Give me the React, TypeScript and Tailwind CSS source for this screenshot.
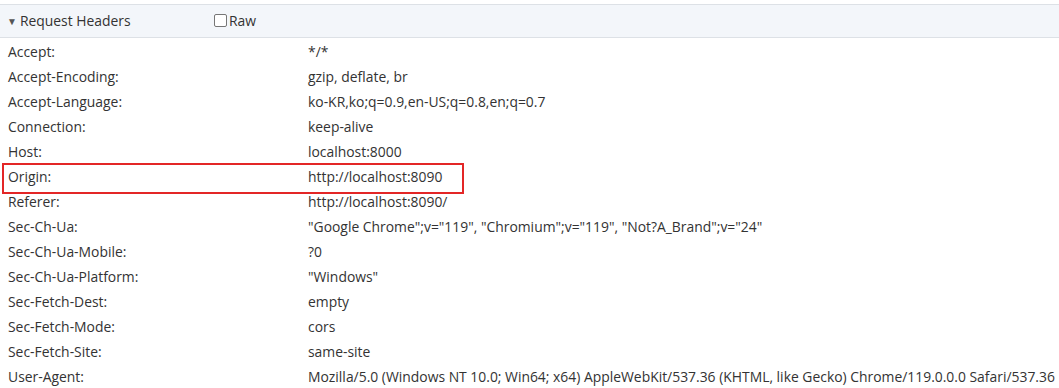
import React from "react";

const rows: [string, string][] = [
  ["Accept:", "*/*"],
  ["Accept-Encoding:", "gzip, deflate, br"],
  ["Accept-Language:", "ko-KR,ko;q=0.9,en-US;q=0.8,en;q=0.7"],
  ["Connection:", "keep-alive"],
  ["Host:", "localhost:8000"],
  ["Origin:", "http://localhost:8090"],
  ["Referer:", "http://localhost:8090/"],
  ["Sec-Ch-Ua:", "\"Google Chrome\";v=\"119\", \"Chromium\";v=\"119\", \"Not?A_Brand\";v=\"24\""],
  ["Sec-Ch-Ua-Mobile:", "?0"],
  ["Sec-Ch-Ua-Platform:", "\"Windows\""],
  ["Sec-Fetch-Dest:", "empty"],
  ["Sec-Fetch-Mode:", "cors"],
  ["Sec-Fetch-Site:", "same-site"],
  ["User-Agent:", "Mozilla/5.0 (Windows NT 10.0; Win64; x64) AppleWebKit/537.36 (KHTML, like Gecko) Chrome/119.0.0.0 Safari/537.36"],
];

export default function App() {
  return (
    <div
      className="w-[1059px] h-[388px] bg-white pt-[4px] overflow-hidden text-[#333333] text-[13.9px]"
      style={{ fontFamily: '"Open Sans", "Noto Sans", sans-serif' }}
    >
      <div className="h-[34px] border-y border-[#dde1e6] bg-[#f3f6fa] flex items-center">
        <div className="w-[206px] flex items-center pl-[7px]">
          <span className="text-[10px] text-[#555] mr-[3px] leading-none">▼</span>
          <span>Request Headers</span>
        </div>
        <div className="flex items-center">
          <span className="w-[13px] h-[13px] border border-[#767676] rounded-[2px] bg-white mr-[2px] ml-[8px]" />
          <span>Raw</span>
        </div>
      </div>
      {rows.map(([k, v]) => (
        <div key={k} className="relative h-[25px] flex items-center whitespace-nowrap pt-[3px]">
          <div className="w-[308px] pl-[8px]">{k}</div>
          <div>{v}</div>
          {k === "Origin:" && (
            <div className="absolute left-[2px] top-[0px] w-[462px] h-[31px] border-2 border-[#e32626]" />
          )}
        </div>
      ))}
    </div>
  );
}
